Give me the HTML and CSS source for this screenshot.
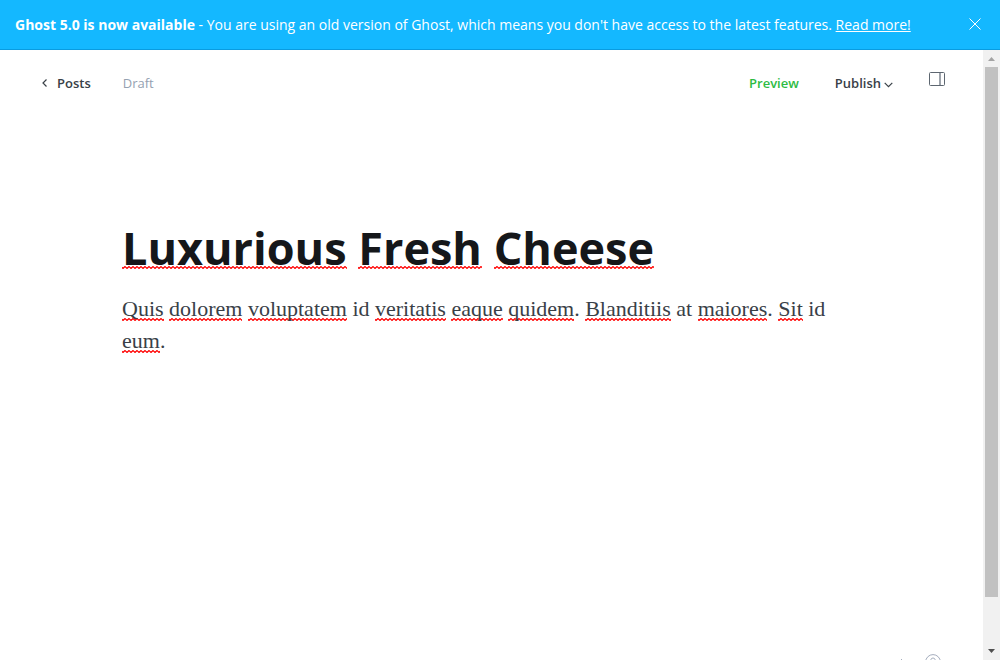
FILE: index.html
```html
<!DOCTYPE html>
<html lang="en">
<head>
<meta charset="utf-8">
<title>Luxurious Fresh Cheese</title>
<link rel="stylesheet" href="styles.css">
</head>
<body>
<div class="app">
  <aside class="banner">
    <p class="banner-text"><strong>Ghost 5.0 is now available</strong> - You are using an old version of Ghost, which means you don't have access to the latest features. <a href="#">Read more!</a></p>
    <button class="icon-button close" aria-label="Close">
      <svg width="12" height="12" viewBox="0 0 12 12"><path d="M.5.5l11 11M11.500.5l-11 11" fill="none" stroke="currentColor"/></svg>
    </button>
  </aside>
  <div class="workspace">
    <main class="editor">
      <header class="toolbar">
        <a class="back" href="#"><svg width="6" height="8" viewBox="0 0 6 8"><path d="M4.500.5L1 4l3.500 3.500" fill="none" stroke="currentColor" stroke-width="1.200"/></svg>Posts</a>
        <span class="status">Draft</span>
        <nav class="actions">
          <button class="preview">Preview</button>
          <button class="publish">Publish<svg width="9" height="6" viewBox="0 0 9 6"><path d="M.7.8l3.800 3.800L8.300.8" fill="none" stroke="currentColor" stroke-width="1.200"/></svg></button>
          <button class="icon-button settings" aria-label="Settings"><svg width="16" height="14" viewBox="0 0 16 14"><rect x=".5" y=".5" width="15" height="13" rx="1" fill="none" stroke="#5d6670"/><path d="M11 1v12" stroke="#7d858f" stroke-width="1.500"/></svg></button>
        </nav>
      </header>
      <article class="post">
        <h1 class="title"><span class="typo">Luxurious</span> <span class="typo">Fresh</span> <span class="typo">Cheese</span></h1>
        <p class="body"><span class="typo">Quis</span> <span class="typo">dolorem</span> <span class="typo">voluptatem</span> id <span class="typo">veritatis</span> <span class="typo">eaque</span> <span class="typo">quidem</span>. <span class="typo">Blanditiis</span> at <span class="typo">maiores</span>. <span class="typo">Sit</span> id <span class="typo">eum</span>.</p>
      </article>
      <footer class="footer">
        <span class="mark"></span>
        <button class="icon-button help" aria-label="Help"><svg width="16" height="16" viewBox="0 0 16 16"><circle cx="8" cy="8" r="7.400" fill="none" stroke="#a5adbd"/><path d="M5.700 6.300a2.300 2.300 0 1 1 3.500 2c-.8.500-1.200.8-1.200 1.700M8 11.500v1" fill="none" stroke="#a5adbd"/></svg></button>
      </footer>
    </main>
    <div class="scrollbar" aria-hidden="true">
      <svg class="arrow" width="7" height="4" viewBox="0 0 7 4"><path d="M0 4l3.500-4L7 4z" fill="#a3a3a3"/></svg>
      <div class="track"><div class="thumb"></div></div>
      <svg class="arrow" width="7" height="4" viewBox="0 0 7 4"><path d="M0 0l3.500 4L7 0z" fill="#505050"/></svg>
    </div>
  </div>
</div>
</body>
</html>
```
FILE: styles.css
```css
* { box-sizing: border-box; }
body { margin: 0; font-family: "Open Sans", "Noto Sans", sans-serif; font-size: 13px; color: #394047; background: #fff; }
button { padding: 0; border: 0; background: none; font: inherit; color: inherit; cursor: pointer; }
a { color: inherit; }
svg { display: block; }
.app { display: flex; flex-direction: column; height: 100vh; overflow: hidden; }

.banner { display: flex; align-items: center; justify-content: space-between; flex: none; height: 50px; padding: 0 19px 2px 15px; background: #14b8ff; border-bottom: 1px solid #0a9ce0; color: #fff; }
.banner-text { margin: 0; padding-top: 2px; font-size: 14px; line-height: 20px; white-space: nowrap; }
.banner-text strong { font-weight: 700; }

.workspace { display: flex; flex: 1; min-height: 0; }
.editor { display: flex; flex: 1; flex-direction: column; min-width: 0; }
.toolbar { display: flex; align-items: center; padding: 22px 38px 0 42px; line-height: 22px; font-weight: 600; }
.back { display: flex; align-items: center; gap: 9px; text-decoration: none; }
.status { margin-left: 32px; color: #95a1b1; font-weight: 400; }
.actions { display: flex; align-items: center; gap: 36px; margin-left: auto; }
.preview { color: #2dbb43; }
.publish { display: flex; align-items: center; gap: 3px; }
.publish svg { margin-top: 4px; }
.settings { padding-bottom: 8px; }

.post { flex: 1; padding: 124px 120px 0 122px; }
.title { margin: 0; font-size: 45px; line-height: 60px; font-weight: 700; color: #15171a; }
.body { margin: 15px 0 0; font-family: Georgia, "Liberation Serif", serif; font-size: 22px; line-height: 32px; color: #394047; }
/* spell-check squiggle */
.typo {
  background-image: url("data:image/svg+xml,%3Csvg xmlns='http://www.w3.org/2000/svg' width='4' height='3'%3E%3Cpath d='M-1 .5L1 2.500L3 .5L5 2.500' fill='none' stroke='red' stroke-width='1.200'/%3E%3C/svg%3E");
  background-repeat: repeat-x;
  background-position: 0 100%;
}
.title .typo { background-position: 0 calc(100% - 9px); }

.footer { display: flex; justify-content: flex-end; gap: 23px; height: 6px; padding-right: 42px; }
.mark { align-self: flex-end; width: 1px; height: 1px; background: #a5adbd; }
.help { height: 16px; }

.scrollbar { display: flex; flex-direction: column; align-items: center; flex: none; width: 17px; padding: 7px 0; background: #f1f1f1; }
.track { flex: 1; width: 13px; margin: 6px 0; }
.thumb { height: 92%; background: #c1c1c1; }
```
